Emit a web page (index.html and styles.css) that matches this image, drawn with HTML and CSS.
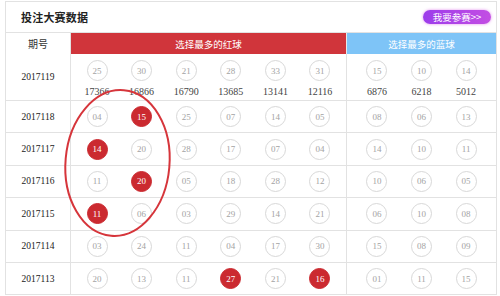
FILE: index.html
```html
<!DOCTYPE html>
<html lang="zh">
<head>
<meta charset="utf-8">
<link rel="stylesheet" href="styles.css">
</head>
<body>
<div class="panel">
  <div class="top">
    <h2 class="title">投注大赛数据</h2>
    <a class="join">我要参赛&gt;&gt;</a>
  </div>
  <div class="row head">
    <div class="period">期号</div>
    <div class="reds">选择最多的红球</div>
    <div class="blues">选择最多的蓝球</div>
  </div>
  <div class="row first">
    <div class="period">2017119</div>
    <div class="reds">
      <div class="cell"><span class="ball">25</span><span class="cnt">17366</span></div>
      <div class="cell"><span class="ball">30</span><span class="cnt">16866</span></div>
      <div class="cell"><span class="ball">21</span><span class="cnt">16790</span></div>
      <div class="cell"><span class="ball">28</span><span class="cnt">13685</span></div>
      <div class="cell"><span class="ball">33</span><span class="cnt">13141</span></div>
      <div class="cell"><span class="ball">31</span><span class="cnt">12116</span></div>
    </div>
    <div class="blues">
      <div class="cell"><span class="ball">15</span><span class="cnt">6876</span></div>
      <div class="cell"><span class="ball">10</span><span class="cnt">6218</span></div>
      <div class="cell"><span class="ball">14</span><span class="cnt">5012</span></div>
    </div>
  </div>
  <div class="row">
    <div class="period">2017118</div>
    <div class="reds">
      <div class="cell"><span class="ball">04</span></div>
      <div class="cell"><span class="ball hit">15</span></div>
      <div class="cell"><span class="ball">25</span></div>
      <div class="cell"><span class="ball">07</span></div>
      <div class="cell"><span class="ball">14</span></div>
      <div class="cell"><span class="ball">05</span></div>
    </div>
    <div class="blues">
      <div class="cell"><span class="ball">08</span></div>
      <div class="cell"><span class="ball">06</span></div>
      <div class="cell"><span class="ball">13</span></div>
    </div>
  </div>
  <div class="row">
    <div class="period">2017117</div>
    <div class="reds">
      <div class="cell"><span class="ball hit">14</span></div>
      <div class="cell"><span class="ball">20</span></div>
      <div class="cell"><span class="ball">28</span></div>
      <div class="cell"><span class="ball">17</span></div>
      <div class="cell"><span class="ball">07</span></div>
      <div class="cell"><span class="ball">04</span></div>
    </div>
    <div class="blues">
      <div class="cell"><span class="ball">14</span></div>
      <div class="cell"><span class="ball">10</span></div>
      <div class="cell"><span class="ball">11</span></div>
    </div>
  </div>
  <div class="row">
    <div class="period">2017116</div>
    <div class="reds">
      <div class="cell"><span class="ball">11</span></div>
      <div class="cell"><span class="ball hit">20</span></div>
      <div class="cell"><span class="ball">05</span></div>
      <div class="cell"><span class="ball">18</span></div>
      <div class="cell"><span class="ball">28</span></div>
      <div class="cell"><span class="ball">12</span></div>
    </div>
    <div class="blues">
      <div class="cell"><span class="ball">10</span></div>
      <div class="cell"><span class="ball">06</span></div>
      <div class="cell"><span class="ball">05</span></div>
    </div>
  </div>
  <div class="row">
    <div class="period">2017115</div>
    <div class="reds">
      <div class="cell"><span class="ball hit">11</span></div>
      <div class="cell"><span class="ball">06</span></div>
      <div class="cell"><span class="ball">03</span></div>
      <div class="cell"><span class="ball">29</span></div>
      <div class="cell"><span class="ball">14</span></div>
      <div class="cell"><span class="ball">21</span></div>
    </div>
    <div class="blues">
      <div class="cell"><span class="ball">06</span></div>
      <div class="cell"><span class="ball">10</span></div>
      <div class="cell"><span class="ball">08</span></div>
    </div>
  </div>
  <div class="row">
    <div class="period">2017114</div>
    <div class="reds">
      <div class="cell"><span class="ball">03</span></div>
      <div class="cell"><span class="ball">24</span></div>
      <div class="cell"><span class="ball">11</span></div>
      <div class="cell"><span class="ball">04</span></div>
      <div class="cell"><span class="ball">17</span></div>
      <div class="cell"><span class="ball">30</span></div>
    </div>
    <div class="blues">
      <div class="cell"><span class="ball">15</span></div>
      <div class="cell"><span class="ball">08</span></div>
      <div class="cell"><span class="ball">09</span></div>
    </div>
  </div>
  <div class="row">
    <div class="period">2017113</div>
    <div class="reds">
      <div class="cell"><span class="ball">20</span></div>
      <div class="cell"><span class="ball">13</span></div>
      <div class="cell"><span class="ball">11</span></div>
      <div class="cell"><span class="ball hit">27</span></div>
      <div class="cell"><span class="ball">21</span></div>
      <div class="cell"><span class="ball hit">16</span></div>
    </div>
    <div class="blues">
      <div class="cell"><span class="ball">01</span></div>
      <div class="cell"><span class="ball">11</span></div>
      <div class="cell"><span class="ball">15</span></div>
    </div>
  </div>
</div>
<svg class="ring" width="500" height="296" viewBox="0 0 500 296">
  <ellipse cx="117.5" cy="163" rx="52" ry="73" transform="rotate(5 117.5 163)" fill="none" stroke="#d6353b" stroke-width="2"/>
</svg>
</body>
</html>
```
FILE: styles.css
```css
html, body {
  margin: 0;
  padding: 0;
  background: #fff;
}
body {
  position: relative;
  width: 500px;
  height: 296px;
  overflow: hidden;
  font-family: "Liberation Serif", "Noto Sans CJK SC", serif;
}
.panel {
  margin: 1px 0 0 5px;
  width: 492px;
  box-sizing: border-box;
  border: 1px solid #e2e2e2;
}
.top {
  height: 30px;
  box-sizing: border-box;
  display: flex;
  align-items: center;
  justify-content: space-between;
  padding: 0 5px 1px 15px;
}
.title {
  margin: 0;
  font-family: "Noto Sans CJK SC", sans-serif;
  font-size: 11px;
  font-weight: 700;
  color: #222;
  letter-spacing: 0.2px;
}
.join {
  display: block;
  width: 68px;
  height: 14px;
  line-height: 14px;
  border-radius: 8px;
  text-align: center;
  color: #fff;
  font-family: "Noto Sans CJK SC", sans-serif;
  font-size: 9.5px;
  background: linear-gradient(90deg, #9c3ceb, #c34ee3);
  box-shadow: 0 0 3px rgba(214, 90, 230, 0.7);
}
.row {
  display: flex;
  height: 32.4px;
  box-sizing: border-box;
  border-top: 1px solid #e2e2e2;
}
.row > div {
  box-sizing: border-box;
}
.period {
  width: 65px;
  flex: none;
  border-right: 1px solid #e2e2e2;
  display: flex;
  align-items: center;
  justify-content: center;
  font-size: 9.5px;
  color: #222;
}
.reds {
  width: 276px;
  flex: none;
  border-right: 1px solid #e2e2e2;
  display: flex;
  justify-content: center;
  align-items: center;
}
.blues {
  flex: 1;
  display: flex;
  justify-content: center;
  align-items: center;
}
.row.head {
  height: 22px;
  border-top: 1px solid #e2e2e2;
}
.head .period {
  font-family: "Noto Sans CJK SC", sans-serif;
  font-size: 10px;
  color: #333;
}
.head .reds {
  background: #d0353b;
  color: #fff;
  font-family: "Noto Sans CJK SC", sans-serif;
  font-size: 9.5px;
  border-right: 1px solid #e9e9e9;
}
.head .blues {
  background: #7ec4f7;
  color: #fff;
  font-family: "Noto Sans CJK SC", sans-serif;
  font-size: 9.5px;
}
.row.first {
  height: 46px;
  border-top: none;
}
.first .reds, .first .blues {
  align-items: flex-start;
  padding-top: 6px;
}
.cell {
  width: 44.6px;
  flex: none;
  display: flex;
  flex-direction: column;
  align-items: center;
}
.ball {
  width: 21px;
  height: 21px;
  box-sizing: border-box;
  border: 1px solid #d8d8d8;
  border-radius: 50%;
  display: flex;
  align-items: center;
  justify-content: center;
  font-size: 9px;
  color: #a3a3a3;
}
.ball.hit {
  background: #cb2a30;
  border-color: #cb2a30;
  color: #fff;
}
.cnt {
  margin-top: 5px;
  font-size: 10px;
  line-height: 12px;
  color: #444;
}
.ring {
  position: absolute;
  left: 0;
  top: 0;
  pointer-events: none;
}
```
